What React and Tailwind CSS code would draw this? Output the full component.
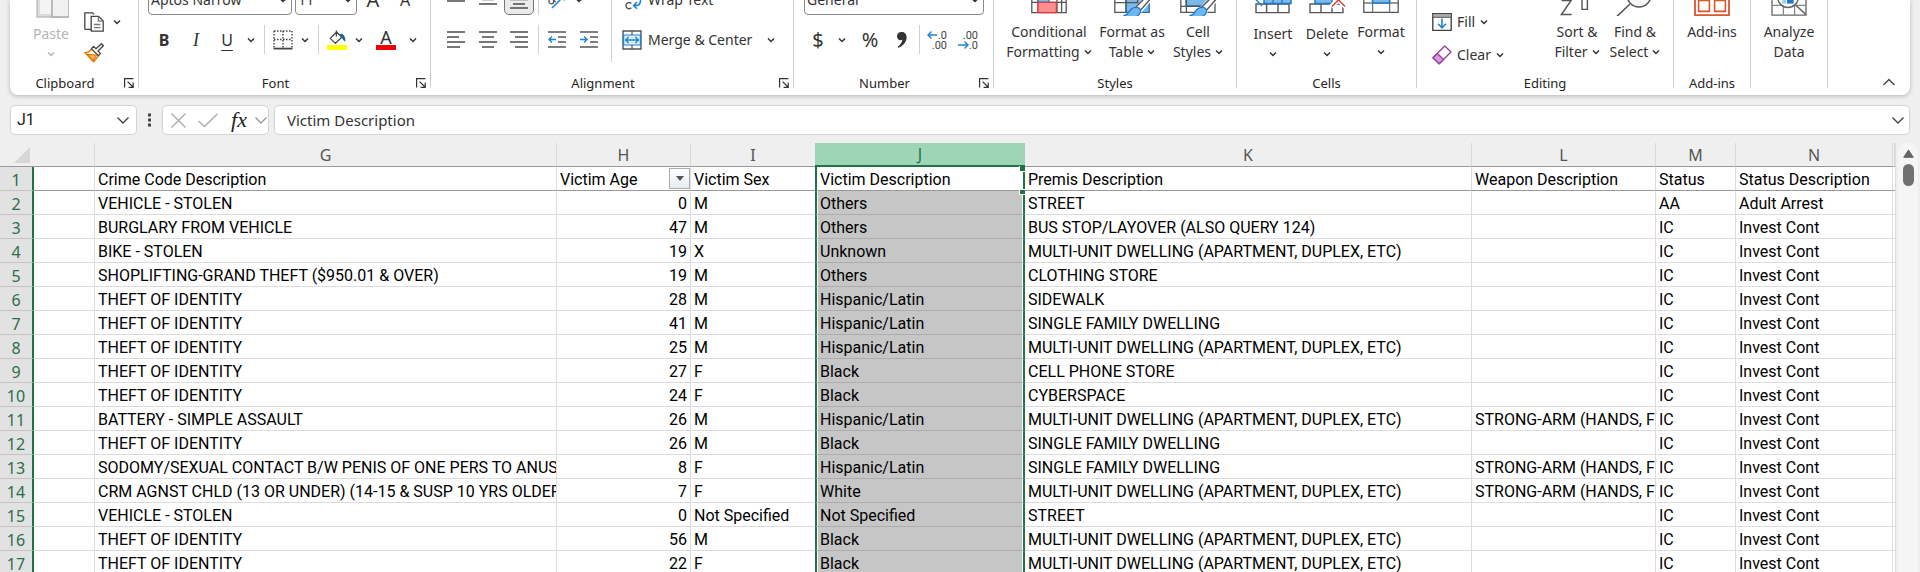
import React from "react";

const UI = "font-['Noto_Sans','Open_Sans',sans-serif]";

/* ---------- small shared pieces ---------- */

function Chevron({ className = "text-[#333]", size = 8 }) {
  return (
    <svg width={size} height={size} viewBox="0 0 8 8" className={`shrink-0 ${className}`} fill="none" stroke="currentColor" strokeWidth="1.5" aria-hidden="true">
      <path d="M1 2.5 4 5.5 7 2.5" />
    </svg>
  );
}

function WideChevron({ className = "text-[#444]", up = false }) {
  return (
    <svg width="14" height="14" viewBox="0 0 14 14" className={`shrink-0 ${className}`} fill="none" stroke="currentColor" strokeWidth="1.4" aria-hidden="true">
      <path d={up ? "M1.5 10 7 4.5 12.5 10" : "M1.5 4.5 7 10 12.5 4.5"} />
    </svg>
  );
}

function IconButton({ label, className = "w-8", children }) {
  return (
    <button type="button" aria-label={label} className={`flex h-full shrink-0 items-center justify-center ${className}`}>
      {children}
    </button>
  );
}

function Drop({ label }) {
  return (
    <IconButton label={label} className="w-[18px]">
      <Chevron />
    </IconButton>
  );
}

function Rule() {
  return <div className="mx-1 h-full w-px shrink-0 bg-[#d0d0d0]" />;
}

function Group({ label, launcher = false, className, children }) {
  return (
    <>
      <section aria-label={label || "Analysis"} className={`flex h-full shrink-0 flex-col justify-end ${className}`}>
        <div className="flex min-h-0 flex-1 items-end">{children}</div>
        <div className="flex h-[21px] shrink-0 items-start">
          <h2 className="flex-1 text-center text-[13px] leading-[18px] text-[#262626]">{label}</h2>
          {launcher && (
            <button type="button" aria-label={`${label} settings`} className="flex h-[18px] w-[18px] shrink-0 items-center justify-center">
              <svg width="10" height="10" viewBox="0 0 10 10" fill="none" stroke="#333" strokeWidth="1.2">
                <path d="M.6 9.5V.6H9.4M3.6 3.6 9 9M9.2 4.6V9.3H4.6" />
              </svg>
            </button>
          )}
        </div>
      </section>
      <div className="h-[88px] w-px shrink-0 bg-[#d0d0d0]" />
    </>
  );
}

function ToolRows({ className = "", children }) {
  return <div className={`flex shrink-0 flex-col gap-2.5 pb-5 ${className}`}>{children}</div>;
}

function BigButton({ icon, first, second, drop = false, split = false, disabled = false, className }) {
  return (
    <button
      type="button"
      disabled={disabled}
      className={`flex shrink-0 flex-col items-center text-sm leading-5 ${split ? "pb-2.5" : "pb-3"} ${disabled ? "text-[#b4b4b4]" : "text-[#333]"} ${className}`}
    >
      <span className="mb-1.5 block">{icon}</span>
      <span className="whitespace-nowrap">{first}</span>
      <span className="flex h-5 items-center gap-1 whitespace-nowrap">
        {second}
        {drop && <Chevron className={disabled ? "text-[#b4b4b4]" : "text-[#333]"} />}
      </span>
    </button>
  );
}

function Picker({ label, value, className }) {
  return (
    <div className={`flex h-[30px] shrink-0 items-center rounded-[4px] border border-[#8a8a8a] bg-white pr-1 ${className}`}>
      <select aria-label={label} defaultValue={value} className="min-w-0 flex-1 appearance-none bg-transparent pl-0.5 text-sm text-[#333] outline-none">
        <option>{value}</option>
      </select>
      <Chevron />
    </div>
  );
}

/* ---------- icons ---------- */

function Bars({ rows, size = 18 }) {
  return (
    <svg width={size} height="18" viewBox="0 0 18 18" stroke="#555" strokeWidth="1.6" aria-hidden="true">
      {rows.map(([x1, x2, y]) => (
        <path key={y} d={`M${x1} ${y}H${x2}`} />
      ))}
    </svg>
  );
}

const leftRows = [[0, 18, 1], [0, 12, 6], [0, 18, 11], [0, 13, 16]];
const centerRows = [[0, 18, 1], [3, 15, 6], [0, 18, 11], [3, 15, 16]];
const rightRows = [[0, 18, 1], [5, 18, 6], [0, 18, 11], [5, 18, 16]];

function IndentIcon({ increase }) {
  return (
    <svg width="18" height="18" viewBox="0 0 18 18" fill="none" aria-hidden="true">
      <path d="M0 1H18M10 6H18M10 11H18M0 16H18" stroke="#555" strokeWidth="1.6" />
      <path d={increase ? "M0 8.5H7M4 5.5 7 8.5 4 11.5" : "M8 8.5H1M4 5.5 1 8.5 4 11.5"} stroke="#1f86d0" strokeWidth="1.5" />
    </svg>
  );
}

const PasteIcon = (
  <svg width="36" height="36" viewBox="0 0 36 36" fill="#e9e9e9" stroke="#bdbdbd" strokeWidth="1.4">
    <path d="M4 4H28V35H4Z" fill="#dcdcdc" />
    <path d="M7 7H18V32H7Z" fill="#f4f4f4" stroke="none" />
    <path d="M19 14H36V35H19Z" fill="#f0f0f0" stroke="#a8a8a8" />
  </svg>
);

const CopyIcon = (
  <svg width="20" height="20" viewBox="0 0 20 20" fill="#fff" stroke="#444" strokeWidth="1.3">
    <path d="M.8 17.4V.8H8.5L10 2.4M.8 17.4H7" />
    <path d="M7.2 4.4H14.6L19.2 9V19.2H7.2Z" />
    <path d="M14.4 4.6V9.2H19M10 12.5H16.5M10 15.6H16.5" fill="none" stroke="#777" />
  </svg>
);

const PainterIcon = (
  <svg width="20" height="20" viewBox="0 0 20 20" fill="none" strokeLinejoin="round">
    <path d="M.8 9.6 9.6 18.8 14.8 12.6 7.6 5.8C6 8.4 3.6 9.6.8 9.6Z" fill="#fff3e0" stroke="#e07a10" strokeWidth="1.4" />
    <path d="M3.4 11.4 12.6 12 9.2 17.6Z" fill="#f7b35c" stroke="#e07a10" strokeWidth="1.1" />
    <path d="M7.4 5.6 9.6 3.4 12 5.8 17.4 .8 19.4 2.8 14 8 16.4 10.4 14.4 12.6Z" fill="#fff" stroke="#444" strokeWidth="1.3" />
  </svg>
);

const BordersIcon = (
  <svg width="20" height="20" viewBox="0 0 20 20" fill="none" stroke="#444">
    <path d="M1 1H19M1 9.5H19M1 1V18M10 1V18M19 1V18" strokeWidth="1.4" strokeDasharray="1.5 1.5" />
    <path d="M.5 18.6H19.5" strokeWidth="1.8" />
  </svg>
);

const FillColorIcon = (
  <svg width="20" height="20" viewBox="0 0 20 20" fill="none">
    <path d="M0 15H20V20H0Z" fill="#ffff00" />
    <path d="M3.2 8.4 9.6 2 14.8 7.2 8.4 13.4ZM9.4 .4V6.4" stroke="#444" strokeWidth="1.3" strokeLinejoin="round" />
    <path d="M13.6 4C16.2 4.2 17.8 6.4 18 10.8 16.4 11 15.8 8 13.6 4Z" fill="#1b5f9e" stroke="#1b5f9e" />
  </svg>
);

const OrientationIcon = (
  <svg width="18" height="18" viewBox="0 0 18 18" fill="none">
    <path d="M4 17 16 5M11.4 5H16V9.6" stroke="#1f86d0" strokeWidth="1.5" />
    <circle cx="3.4" cy="10.4" r="2.4" stroke="#555" strokeWidth="1.3" />
    <path d="M4 7.4 7.6 11" stroke="#555" strokeWidth="1.3" />
  </svg>
);

const WrapIcon = (
  <svg width="20" height="20" viewBox="0 0 20 20" fill="none">
    <path d="M9.4 13.4C6.4 11.4 4 13 4 15.6 4 18.4 6.8 19.6 9.4 17.8" stroke="#555" strokeWidth="1.4" />
    <path d="M13 4H17.6C19.6 8 18.6 14.6 16 15.4H12M15 12 11.6 15.4 15 18.8" stroke="#1f86d0" strokeWidth="1.6" />
  </svg>
);

const MergeIcon = (
  <svg width="20" height="20" viewBox="0 0 20 20" fill="none">
    <path d="M1 1H19V19H1Z" fill="#fff" stroke="#555" strokeWidth="1.4" />
    <path d="M1.6 5H18.4V15H1.6Z" fill="#d7ecfb" stroke="#1f86d0" strokeWidth="1.2" />
    <path d="M10 1V5M10 15V19" stroke="#555" strokeWidth="1.2" />
    <path d="M3.6 10H16.4M6.6 7 3.6 10 6.6 13M13.4 7 16.4 10 13.4 13" stroke="#1f86d0" strokeWidth="1.4" />
  </svg>
);

function DecimalIcon({ increase }) {
  return (
    <svg width="22" height="22" viewBox="0 0 22 22" aria-hidden="true">
      <g className="font-['Roboto',sans-serif]" fontSize="11" fill="#444">
        <text x="21" y="9.5" textAnchor="end">{increase ? ".0" : ".00"}</text>
        <text x="21" y="20" textAnchor="end">{increase ? ".00" : ".0"}</text>
      </g>
      <path
        d={increase ? "M11 6H2M5.5 2.5 2 6 5.5 9.5" : "M1 16H11M7.5 12.5 11 16 7.5 19.5"}
        fill="none"
        stroke="#1f86d0"
        strokeWidth="1.4"
      />
    </svg>
  );
}

const ConditionalIcon = (
  <svg width="36" height="36" viewBox="0 0 36 36" fill="none" stroke="#555" strokeWidth="1.3">
    <path d="M.8 3H35.2V32.6H.8Z" fill="#fff" />
    <path d="M.8 12.6H35.2M.8 22.4H35.2M7 3V32.6M26 3V32.6M30.6 3V32.6" />
    <path d="M7 12.6H18V22.4H7Z" fill="#7db8ea" stroke="#1f78c8" />
    <path d="M7 22.4H25.4V32.6H7Z" fill="#ff8f8f" stroke="#d83b3b" />
  </svg>
);

function BrushOverlay() {
  return (
    <>
      <path d="M38 11 22 28.4 25.6 31.4 40 15Z" fill="#fff" stroke="#fff" strokeWidth="4" />
      <path d="M37 12 21.4 27.4M38 17 26.4 30.4" stroke="#555" strokeWidth="1.4" />
      <path d="M21.4 27.4C24.6 27.2 26.8 28.6 26.6 31 26 37 16 40 10.4 35.4 15.6 35 14.6 28 21.4 27.4Z" fill="#6db6ee" stroke="#1f78c8" strokeWidth="1.3" />
    </>
  );
}

const FormatTableIcon = (
  <svg width="36" height="36" viewBox="0 0 36 36" fill="none">
    <path d="M.8 3H35V32.4H.8Z" fill="#fff" stroke="#555" strokeWidth="1.3" />
    <path d="M12 12H35V32.4H12Z" fill="#7db8ea" stroke="#1f78c8" strokeWidth="1.3" />
    <path d="M.8 12H12M.8 22.6H35M12 12V32.4M23.6 12V32.4" stroke="#555" strokeWidth="1.3" />
    <BrushOverlay />
  </svg>
);

const CellStylesIcon = (
  <svg width="36" height="36" viewBox="0 0 36 36" fill="none">
    <path d="M.8 3H35V32.4H.8Z" fill="#fff" stroke="#555" strokeWidth="1.3" />
    <path d="M6 8H30V26H6Z" fill="#7db8ea" stroke="#1f78c8" strokeWidth="1.3" />
    <path d="M.8 26.4H20M6.4 3V32.4" stroke="#555" strokeWidth="1.3" />
    <BrushOverlay />
  </svg>
);

const InsertIcon = (
  <svg width="38" height="36" viewBox="0 0 38 36" fill="none">
    <path d="M2 22H35V30.6H2ZM12.6 22V30.6M24 22V30.6" fill="#fff" stroke="#555" strokeWidth="1.4" />
    <path d="M10 8H37V21.4H10Z" fill="#7db8ea" stroke="#1f78c8" strokeWidth="1.5" />
    <path d="M19 14V21M28 14V21" stroke="#1f78c8" strokeWidth="1.3" />
    <path d="M8 9 1 16.6 8 24" stroke="#1f86d0" strokeWidth="1.5" />
  </svg>
);

const DeleteIcon = (
  <svg width="38" height="36" viewBox="0 0 38 36" fill="none">
    <path d="M2 22H35V30.6H2ZM13 22V30.6M24 22V30.6" fill="#fff" stroke="#555" strokeWidth="1.4" />
    <path d="M7 8H24V21.4H7Z" fill="#7db8ea" stroke="#1f78c8" strokeWidth="1.5" />
    <path d="M23 10 38 25M38 10 23 25" stroke="#fff" strokeWidth="5" />
    <path d="M24 11 37 24.6M37 11 24 24.6" stroke="#e0403f" strokeWidth="1.5" />
  </svg>
);

const FormatIcon = (
  <svg width="36" height="36" viewBox="0 0 36 36" fill="none">
    <path d="M.8 4H35.2V32.4H.8Z" fill="#fff" stroke="#555" strokeWidth="1.3" />
    <path d="M.8 14H35.2M.8 23H35.2M9.6 4V32.4M26.6 4V32.4" stroke="#777" strokeWidth="1.3" />
    <path d="M9.6 12H26.6V23H9.6Z" fill="#7db8ea" stroke="#1f78c8" strokeWidth="1.5" />
  </svg>
);

const FillIcon = (
  <svg width="20" height="20" viewBox="0 0 20 20" fill="none">
    <path d="M.8 1.8H19.2V18.4H.8Z" fill="#fff" stroke="#444" strokeWidth="1.4" />
    <path d="M1.4 2.4H18.6V4.6H1.4Z" fill="#aaa" />
    <path d="M.8 5.2H19.2" stroke="#444" strokeWidth="1.1" />
    <path d="M10 6.6V15.6M6 11.8 10 15.8 14 11.8" stroke="#1f86d0" strokeWidth="1.6" />
  </svg>
);

const ClearIcon = (
  <svg width="20" height="20" viewBox="0 0 20 20" fill="none" stroke="#96449e" strokeWidth="1.4" strokeLinejoin="round">
    <path d="M12.8 1 19 7 7.2 18.8 1 12.8Z" fill="#fff" />
    <path d="M5.4 8.4 11.6 14.4 7.2 18.8 1 12.8Z" fill="#d99be0" />
  </svg>
);

const SortIcon = (
  <svg width="36" height="36" viewBox="0 0 36 36" fill="none" stroke="#555" strokeWidth="1.5">
    <path d="M2.6 20.6H12L2.4 34.6H12.6" />
    <path d="M23 8V29.4H28.4V8Z" strokeWidth="1.4" />
  </svg>
);

const FindIcon = (
  <svg width="46" height="36" viewBox="0 0 46 36" fill="none" stroke="#555" strokeWidth="1.5">
    <circle cx="27" cy="15" r="12" fill="#f6f6f6" />
    <path d="M18 24 5 36.4" />
  </svg>
);

const AddinsIcon = (
  <svg width="36" height="36" viewBox="0 0 36 36" fill="none" stroke="#d9572b">
    <path d="M1 1H35V35.2H1Z" strokeWidth="1.8" />
    <path d="M4.6 20.4H15.4V31.4H4.6ZM20.6 20.4H31.4V31.4H20.6ZM4.6 4.6H15.4V15.4H4.6ZM20.6 4.6H31.4V15.4H20.6Z" strokeWidth="1.6" />
  </svg>
);

const AnalyzeIcon = (
  <svg width="36" height="36" viewBox="0 0 36 36" fill="none" stroke="#666" strokeWidth="1.3">
    <path d="M1 1H35V35.2H1Z" fill="#fff" />
    <path d="M1 25.4H35M12.4 24V35M23.6 24V35M1 14H35" stroke="#888" />
    <circle cx="17" cy="17" r="10.4" fill="#fff" strokeWidth="1.5" />
    <path d="M11.4 16H15V23.6H11.4Z" fill="#9ccdf2" stroke="none" />
    <path d="M16 12H22.6V23.6H16Z" fill="#1f78c8" stroke="none" />
    <path d="M24.6 25 35 34.6" strokeWidth="1.6" />
  </svg>
);

/* ---------- ribbon ---------- */

function Ribbon() {
  return (
    <div role="toolbar" aria-label="Home" className="mx-2.5 flex h-[95px] shrink-0 overflow-hidden rounded-b-lg bg-white shadow-[0_1px_4px_rgba(0,0,0,0.25)]">
      <Group label="Clipboard" launcher className="w-32">
        <BigButton icon={PasteIcon} first="Paste" drop split disabled className="ml-2.5 w-[62px]" />
        <div className="flex shrink-0 flex-col gap-px pb-1.5">
          <div className="flex h-[30px]">
            <IconButton label="Copy" className="w-6">{CopyIcon}</IconButton>
            <IconButton label="Copy options" className="w-[22px]"><Chevron /></IconButton>
          </div>
          <div className="flex h-[30px]">
            <IconButton label="Format Painter" className="w-6">{PainterIcon}</IconButton>
          </div>
        </div>
      </Group>

      <Group label="Font" launcher className="w-[291px]">
        <ToolRows className="pl-[9px]">
          <div className="flex h-[30px] items-center">
            <Picker label="Font name" value="Aptos Narrow" className="w-36" />
            <Picker label="Font size" value="11" className="ml-[3px] w-[62px]" />
            <IconButton label="Increase font size" className="w-8 text-xl text-[#333]">A</IconButton>
            <IconButton label="Decrease font size" className="w-8 text-base text-[#333]">A</IconButton>
          </div>
          <div className="flex h-[29px] items-center text-base text-[#333]">
            <IconButton label="Bold" className="w-8 font-bold">B</IconButton>
            <IconButton label="Italic" className="w-8 font-['Liberation_Serif',serif] text-lg italic">I</IconButton>
            <IconButton label="Underline" className="w-[30px] underline underline-offset-4">U</IconButton>
            <Drop label="Underline options" />
            <Rule />
            <IconButton label="Borders" className="w-[27px]">{BordersIcon}</IconButton>
            <Drop label="Border options" />
            <Rule />
            <IconButton label="Fill color" className="w-[27px]">{FillColorIcon}</IconButton>
            <Drop label="Fill color options" />
            <IconButton label="Font color" className="w-9">
              <span className="flex h-5 w-5 justify-center border-b-[5px] border-[#f00000] text-lg leading-[14px]">A</span>
            </IconButton>
            <Drop label="Font color options" />
          </div>
        </ToolRows>
      </Group>

      <Group label="Alignment" launcher className="w-[362px]">
        <ToolRows className="pl-[9px]">
          <div className="flex h-[30px] items-center">
            <IconButton label="Top align"><Bars rows={[[0, 18, 1], [3, 15, 5.5], [0, 18, 10]]} /></IconButton>
            <IconButton label="Middle align"><Bars rows={[[0, 18, 4], [3, 15, 8.5], [0, 18, 13]]} /></IconButton>
            <button type="button" aria-label="Bottom align" aria-pressed="true" className="flex h-[30px] w-[30px] items-center justify-center rounded-[5px] border border-[#777] bg-[#ebebeb]">
              <Bars rows={[[0, 18, 8.5], [3, 15, 13], [0, 18, 17]]} />
            </button>
            <Rule />
            <IconButton label="Orientation" className="w-[27px]">{OrientationIcon}</IconButton>
            <Drop label="Orientation options" />
          </div>
          <div className="flex h-[29px] items-center">
            <IconButton label="Align left"><Bars rows={leftRows} /></IconButton>
            <IconButton label="Center"><Bars rows={centerRows} /></IconButton>
            <IconButton label="Align right" className="w-[30px]"><Bars rows={rightRows} /></IconButton>
            <Rule />
            <IconButton label="Decrease indent" className="w-7"><IndentIcon /></IconButton>
            <IconButton label="Increase indent" className="w-9"><IndentIcon increase /></IconButton>
          </div>
        </ToolRows>
        <div className="flex h-full flex-col pb-3">
          <div className="ml-1 w-px flex-1 bg-[#d0d0d0]" />
        </div>
        <ToolRows className="flex-1 pl-2.5">
          <button type="button" className="flex h-[30px] items-center gap-1.5 text-sm whitespace-nowrap text-[#333]">
            {WrapIcon}
            Wrap Text
          </button>
          <div className="flex h-[29px] items-center">
            <button type="button" className="flex items-center gap-1.5 text-sm whitespace-nowrap text-[#333]">
              {MergeIcon}
              Merge &amp; Center
            </button>
            <IconButton label="Merge options" className="ml-2.5 w-[18px]"><Chevron /></IconButton>
          </div>
        </ToolRows>
      </Group>

      <Group label="Number" launcher className="w-[199px]">
        <ToolRows className="pl-2.5">
          <Picker label="Number format" value="General" className="w-[180px]" />
          <div className="flex h-[29px] items-center text-[#333]">
            <IconButton label="Accounting format" className="w-7 text-xl">$</IconButton>
            <IconButton label="Accounting format options" className="w-5"><Chevron /></IconButton>
            <IconButton label="Percent style" className="w-9 text-xl">%</IconButton>
            <IconButton label="Comma style" className="w-[27px]">
              <svg width="12" height="18" viewBox="0 0 12 18" fill="#333">
                <path d="M5.6 1C2.8 1 1 2.8 1 5.2 1 7.6 2.8 9.2 4.8 9.2 5.4 9.2 6 9 6.4 8.8 6 11.6 4.4 14 1.8 15.6L2.4 16.8C7.4 14.6 10.6 10.8 10.6 6.2 10.6 3 8.6 1 5.6 1Z" />
              </svg>
            </IconButton>
            <Rule />
            <IconButton label="Increase decimal" className="w-[26px]"><DecimalIcon increase /></IconButton>
            <IconButton label="Decrease decimal" className="w-9"><DecimalIcon /></IconButton>
          </div>
        </ToolRows>
      </Group>

      <Group label="Styles" className="w-[242px]">
        <BigButton icon={ConditionalIcon} first="Conditional" second="Formatting" drop className="ml-[9px] w-[92px]" />
        <BigButton icon={FormatTableIcon} first="Format as" second="Table" drop className="w-[74px]" />
        <BigButton icon={CellStylesIcon} first="Cell" second="Styles" drop className="w-[58px]" />
      </Group>

      <Group label="Cells" className="w-[179px]">
        <BigButton icon={InsertIcon} first="Insert" drop split className="ml-[9px] w-[54px]" />
        <BigButton icon={DeleteIcon} first="Delete" drop split className="w-[54px]" />
        <BigButton icon={FormatIcon} first="Format" drop className="w-[54px]" />
      </Group>

      <Group label="Editing" className="w-64">
        <div className="ml-[15px] flex w-[116px] shrink-0 flex-col gap-[3px] pb-1 text-sm text-[#333]">
          <button type="button" className="flex h-[30px] items-center gap-[5px]">{FillIcon}Fill<Chevron /></button>
          <button type="button" className="flex h-[30px] items-center gap-[5px]">{ClearIcon}Clear<Chevron /></button>
        </div>
        <BigButton icon={SortIcon} first="Sort &" second="Filter" drop className="w-[58px]" />
        <BigButton icon={FindIcon} first="Find &" second="Select" drop className="w-[58px]" />
      </Group>

      <Group label="Add-ins" className="w-[76px]">
        <BigButton icon={AddinsIcon} first="Add-ins" className="w-full" />
      </Group>

      <Group className="w-[76px]">
        <BigButton icon={AnalyzeIcon} first="Analyze" second="Data" className="w-full" />
      </Group>

      <div className="flex flex-1 items-end justify-end pr-3.5 pb-1.5">
        <button type="button" aria-label="Collapse ribbon"><WideChevron up /></button>
      </div>
    </div>
  );
}

/* ---------- formula bar ---------- */

function FormulaBar() {
  const box = "flex h-[30px] items-center rounded-[5px] border border-[#d2d2d2] bg-white";
  return (
    <div className="mx-2.5 mt-2.5 mb-2 flex shrink-0 items-center">
      <div className={`${box} w-[127px] pr-1.5 pl-1.5`}>
        <input aria-label="Name box" defaultValue="J1" className="min-w-0 flex-1 font-['Roboto',sans-serif] text-base text-[#222] outline-none" />
        <WideChevron />
      </div>
      <svg width="25" height="14" viewBox="0 0 25 14" fill="#444" aria-hidden="true">
        <path d="M11 .5H14V3.5H11ZM11 5.5H14V8.5H11ZM11 10.5H14V13.5H11Z" />
      </svg>
      <div className={`${box} w-[107px] pl-2`}>
        <button type="button" aria-label="Cancel" className="w-[15px] text-[#aaa]">
          <svg width="15" height="15" viewBox="0 0 15 15" fill="none" stroke="currentColor" strokeWidth="1.3"><path d="M.5.5 14.5 14.5M14.5.5.5 14.5" /></svg>
        </button>
        <button type="button" aria-label="Enter" className="ml-3 w-5 text-[#aaa]">
          <svg width="20" height="15" viewBox="0 0 20 15" fill="none" stroke="currentColor" strokeWidth="1.3"><path d="M.5 8 6.5 13.5 19.5 .8" /></svg>
        </button>
        <button type="button" aria-label="Insert function" className="ml-3 w-[18px] font-['Liberation_Serif',serif] text-[22px] leading-6 text-[#222] italic">fx</button>
        <button type="button" aria-label="Function options" className="ml-1.5"><WideChevron className="text-[#999]" /></button>
      </div>
      <div className={`${box} ml-[5px] flex-1 pr-1 pl-3`}>
        <input aria-label="Formula" defaultValue="Victim Description" className="min-w-0 flex-1 text-[15px] text-[#333] outline-none" />
        <WideChevron />
      </div>
    </div>
  );
}

/* ---------- sheet ---------- */

const T = "THEFT OF IDENTITY";
const MULTI = "MULTI-UNIT DWELLING (APARTMENT, DUPLEX, ETC)";
const SINGLE = "SINGLE FAMILY DWELLING";
const ARM = "STRONG-ARM (HANDS, F";
const HL = "Hispanic/Latin";

const rows = [
  ["VEHICLE - STOLEN", 0, "M", "Others", "STREET", "", "AA", "Adult Arrest"],
  ["BURGLARY FROM VEHICLE", 47, "M", "Others", "BUS STOP/LAYOVER (ALSO QUERY 124)", "", "IC", "Invest Cont"],
  ["BIKE - STOLEN", 19, "X", "Unknown", MULTI, "", "IC", "Invest Cont"],
  ["SHOPLIFTING-GRAND THEFT ($950.01 & OVER)", 19, "M", "Others", "CLOTHING STORE", "", "IC", "Invest Cont"],
  [T, 28, "M", HL, "SIDEWALK", "", "IC", "Invest Cont"],
  [T, 41, "M", HL, SINGLE, "", "IC", "Invest Cont"],
  [T, 25, "M", HL, MULTI, "", "IC", "Invest Cont"],
  [T, 27, "F", "Black", "CELL PHONE STORE", "", "IC", "Invest Cont"],
  [T, 24, "F", "Black", "CYBERSPACE", "", "IC", "Invest Cont"],
  ["BATTERY - SIMPLE ASSAULT", 26, "M", HL, MULTI, ARM, "IC", "Invest Cont"],
  [T, 26, "M", "Black", SINGLE, "", "IC", "Invest Cont"],
  ["SODOMY/SEXUAL CONTACT B/W PENIS OF ONE PERS TO ANUS O", 8, "F", HL, SINGLE, ARM, "IC", "Invest Cont"],
  ["CRM AGNST CHLD (13 OR UNDER) (14-15 & SUSP 10 YRS OLDER)", 7, "F", "White", MULTI, ARM, "IC", "Invest Cont"],
  ["VEHICLE - STOLEN", 0, "Not Specified", "Not Specified", "STREET", "", "IC", "Invest Cont"],
  [T, 56, "M", "Black", MULTI, "", "IC", "Invest Cont"],
  [T, 22, "F", "Black", MULTI, "", "IC", "Invest Cont"],
];

const columns = [
  ["", "w-[61px]"],
  ["G", "w-[462px]"],
  ["H", "w-[134px]"],
  ["I", "w-[124px]"],
  ["J", "w-[210px]"],
  ["K", "w-[447px]"],
  ["L", "w-[184px]"],
  ["M", "w-[80px]"],
  ["N", "w-[157px]"],
  ["", ""],
];

const titles = ["Crime Code Description", "Victim Age", "Victim Sex", "Victim Description", "Premis Description", "Weapon Description", "Status", "Status Description"];

const cellBase = "h-6 overflow-hidden border-b pr-0.5 pl-[3px] pt-[3px] pb-0 text-left align-top font-normal whitespace-nowrap leading-5";

function RowHead({ n }) {
  return (
    <th scope="row" className="h-6 border-r-2 border-b border-r-[#217346] border-b-[#c4c4c4] bg-[#e2e2e2] px-0 pt-[3px] pb-0 text-center align-top font-['Noto_Sans',sans-serif] text-base leading-5 font-normal text-[#2b6e49]">
      {n}
    </th>
  );
}

function Handle({ className }) {
  return <span className={`absolute z-10 h-[6px] w-[6px] border-b border-l border-white bg-[#217346] ${className}`} />;
}

function Sheet() {
  return (
    <table className="w-full table-fixed border-separate border-spacing-0 bg-white font-['Roboto','Liberation_Sans',sans-serif] text-base text-black">
      <colgroup>
        <col className="w-[34px]" />
        {columns.map(([, w], i) => (
          <col key={i} className={w} />
        ))}
      </colgroup>
      <thead>
        <tr className="font-['Noto_Sans',sans-serif]">
          <th className="h-6 border-b border-[#999] bg-[#efefef] p-0">
            <svg width="16" height="16" viewBox="0 0 16 16" className="ml-3.5" fill="#d6d6d6" aria-label="Select all"><path d="M16 0V16H0Z" /></svg>
          </th>
          {columns.map(([name], i) => (
            <th
              key={i}
              scope="col"
              className={`h-6 p-0 text-center align-middle text-base leading-[22px] font-normal ${
                name === "J"
                  ? "border-b-2 border-[#217346] bg-[#9fd5b7] text-[#217346]"
                  : `border-b border-b-[#999] bg-[#efefef] text-[#555] ${name === "I" ? "" : "border-r border-r-[#d9d9d9]"}`
              }`}
            >
              {name}
            </th>
          ))}
        </tr>
      </thead>
      <tbody>
        <tr>
          <RowHead n={1} />
          <td className={`${cellBase} border-r border-r-[#dcdcdc] border-b-[#999]`} />
          {titles.map((t, i) => {
            if (t === "Victim Age")
              return (
                <td key={t} className={`${cellBase} border-r border-r-[#dcdcdc] border-b-[#999]`}>
                  <div className="flex h-5 items-center justify-between">
                    {t}
                    <button type="button" aria-label="Filter Victim Age" className="-mt-1.5 -mr-0.5 -mb-0.5 flex h-[21px] w-[21px] items-center justify-center border border-[#a9adb3] bg-linear-to-b from-white to-[#e8ecf2]">
                      <svg width="8" height="5" viewBox="0 0 8 5" fill="#555"><path d="M0 0H8L4 5Z" /></svg>
                    </button>
                  </div>
                </td>
              );
            if (t === "Victim Description")
              return (
                <td key={t} className={`${cellBase} relative overflow-visible border-x-2 border-x-[#217346] border-b-[#999]`}>
                  {t}
                  <Handle className="-top-px -right-[2px]" />
                  <Handle className="-right-[2px] -bottom-[5px] border-t" />
                </td>
              );
            return (
              <td key={t} className={`${cellBase} border-b-[#999] ${i === 2 ? "" : "border-r border-r-[#dcdcdc]"}`}>
                {t}
              </td>
            );
          })}
          <td className={`${cellBase} border-b-[#999]`} />
        </tr>
        {rows.map((r, ri) => (
          <tr key={ri}>
            <RowHead n={ri + 2} />
            <td className={`${cellBase} border-r border-r-[#dcdcdc] border-b-[#dcdcdc]`} />
            {r.map((v, i) => (
              <td
                key={i}
                className={`${cellBase} ${
                  i === 3
                    ? "border-x-2 border-x-[#217346] border-b-[#adadad] bg-[#c6c6c6] shadow-[inset_1px_0_0_#fff,inset_-1px_0_0_#fff]"
                    : `border-b-[#dcdcdc] ${i === 2 ? "" : "border-r border-r-[#dcdcdc]"}`
                }`}
              >
                {i === 1 ? <div className="pr-px text-right">{v}</div> : v}
              </td>
            ))}
            <td className={`${cellBase} border-b-[#dcdcdc]`} />
          </tr>
        ))}
      </tbody>
    </table>
  );
}

export default function App() {
  return (
    <main className={`flex h-screen w-full flex-col overflow-hidden bg-[#efefef] ${UI}`}>
      <Ribbon />
      <FormulaBar />
      <div className="flex min-h-0 flex-1 items-start">
        <div className="min-w-0 flex-1">
          <Sheet />
        </div>
        <div className="flex h-full w-[25px] shrink-0 justify-center border-l border-[#dcdcdc]">
          <div className="flex h-full w-5 flex-col items-center gap-1.5 rounded-t-lg bg-[#f5f5f5] pt-1.5">
            <svg width="11" height="9" viewBox="0 0 11 9" fill="#666" stroke="#666" strokeLinejoin="round" aria-hidden="true"><path d="M5.5 1 10.3 8.3H.7Z" /></svg>
            <div className="h-[22px] w-[11px] rounded-full bg-[#717171]" />
          </div>
        </div>
      </div>
    </main>
  );
}
